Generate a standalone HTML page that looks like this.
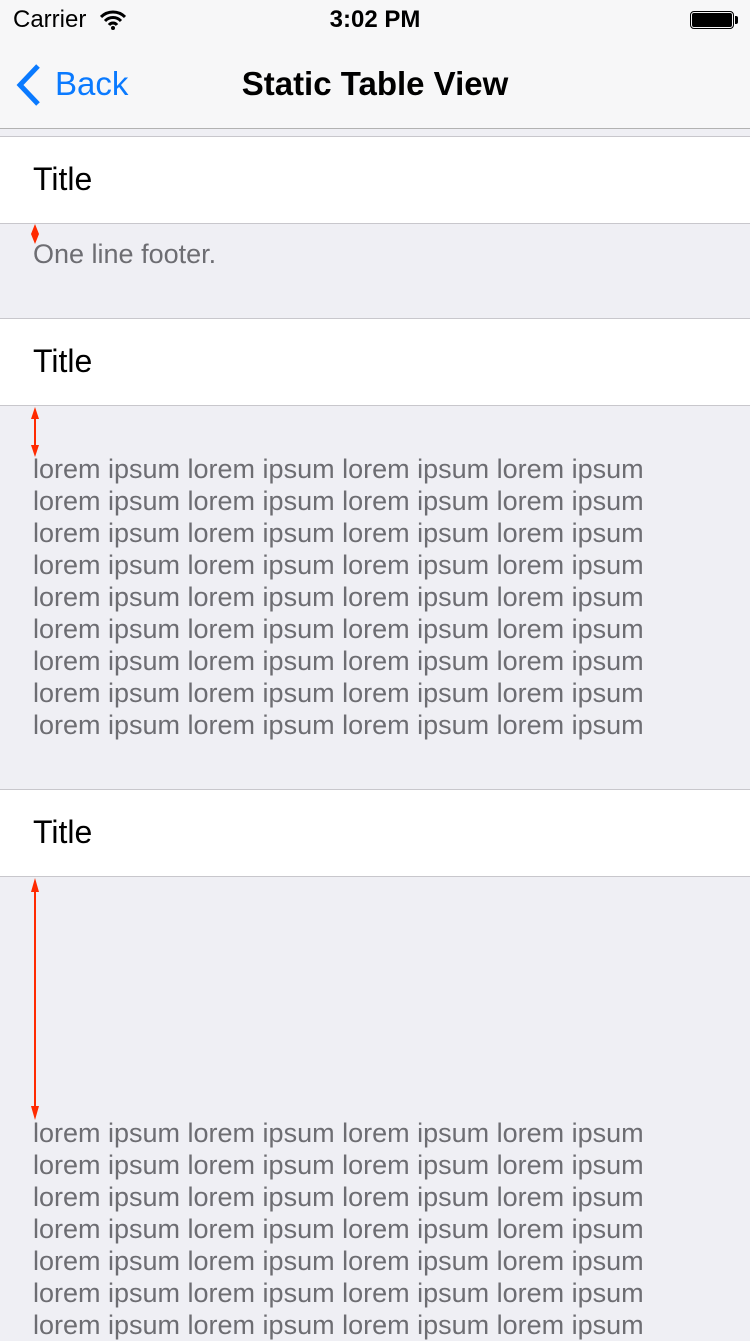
<!DOCTYPE html>
<html><head><meta charset="utf-8"><style>
body{margin:0;width:750px;height:1334px;overflow:hidden;background:#efeff4;font-family:"Liberation Sans",sans-serif;position:relative}
.a{position:absolute}
.nav{left:0;top:0;width:750px;height:128px;background:#f7f7f8;border-bottom:1px solid #b2b2b2}
.cell{left:0;width:750px;height:86px;background:#fff;border-top:1px solid #c8c7cc;border-bottom:1px solid #c8c7cc}
.cell span{position:absolute;left:33px;top:24px;font-size:32px;color:#000}
.ft{left:33px;font-size:27px;color:#6d6d72;line-height:32px;white-space:pre;width:717px}
</style></head><body>
<div class="a nav">
<div class="a" style="left:13px;top:6px;font-size:24px">Carrier</div>
<svg class="a" style="left:100px;top:10px" width="26" height="20" viewBox="0 0 26 20"><path d="M1 7a17 17 0 0 1 24 0M5 11a11 11 0 0 1 16 0M9 15a5 5 0 0 1 8 0" stroke="#000" stroke-width="3" fill="none"/><circle cx="13" cy="18" r="2"/></svg>
<div class="a" style="left:0;width:750px;text-align:center;top:6px;font-size:24px;font-weight:bold">3:02 PM</div>
<div class="a" style="left:690px;top:11px;width:44px;height:18px;border:1px solid #000;border-radius:4px;box-sizing:border-box;padding:1px"><div style="background:#000;width:100%;height:100%;border-radius:2px"></div></div>
<div class="a" style="left:735px;top:16px;width:3px;height:8px;background:#000;border-radius:0 2px 2px 0"></div>
<svg class="a" style="left:15px;top:63px" width="28" height="44" viewBox="0 0 28 44"><path d="M23 3L5 22l18 19" stroke="#0a7aff" stroke-width="5" fill="none"/></svg>
<div class="a" style="left:55px;top:65px;font-size:33px;color:#0a7aff">Back</div>
<div class="a" style="left:0;width:750px;text-align:center;top:65px;font-size:33px;font-weight:bold">Static Table View</div>
</div>
<div class="a cell" style="top:136px"><span>Title</span></div>
<div class="a ft" style="top:238px">One line footer.</div>
<div class="a cell" style="top:318px"><span>Title</span></div>
<div class="a ft" style="top:453px">lorem ipsum lorem ipsum lorem ipsum lorem ipsum
lorem ipsum lorem ipsum lorem ipsum lorem ipsum
lorem ipsum lorem ipsum lorem ipsum lorem ipsum
lorem ipsum lorem ipsum lorem ipsum lorem ipsum
lorem ipsum lorem ipsum lorem ipsum lorem ipsum
lorem ipsum lorem ipsum lorem ipsum lorem ipsum
lorem ipsum lorem ipsum lorem ipsum lorem ipsum
lorem ipsum lorem ipsum lorem ipsum lorem ipsum
lorem ipsum lorem ipsum lorem ipsum lorem ipsum</div>
<div class="a cell" style="top:789px"><span>Title</span></div>
<div class="a ft" style="top:1117px">lorem ipsum lorem ipsum lorem ipsum lorem ipsum
lorem ipsum lorem ipsum lorem ipsum lorem ipsum
lorem ipsum lorem ipsum lorem ipsum lorem ipsum
lorem ipsum lorem ipsum lorem ipsum lorem ipsum
lorem ipsum lorem ipsum lorem ipsum lorem ipsum
lorem ipsum lorem ipsum lorem ipsum lorem ipsum
lorem ipsum lorem ipsum lorem ipsum lorem ipsum</div>
<svg class="a" style="left:0;top:0" width="750" height="1334">
<g fill="#ff2a00" stroke="#ff2a00" stroke-width="2">
<path d="M35 224l-4 10 4 10 4-10z" stroke="none"/>
<line x1="35" y1="412" x2="35" y2="452"/><path d="M35 407l-4 12h8zM35 457l-4-12h8z" stroke="none"/>
<line x1="35" y1="883" x2="35" y2="1115"/><path d="M35 878l-4 14h8zM35 1120l-4-14h8z" stroke="none"/>
</g></svg>
</body></html>
